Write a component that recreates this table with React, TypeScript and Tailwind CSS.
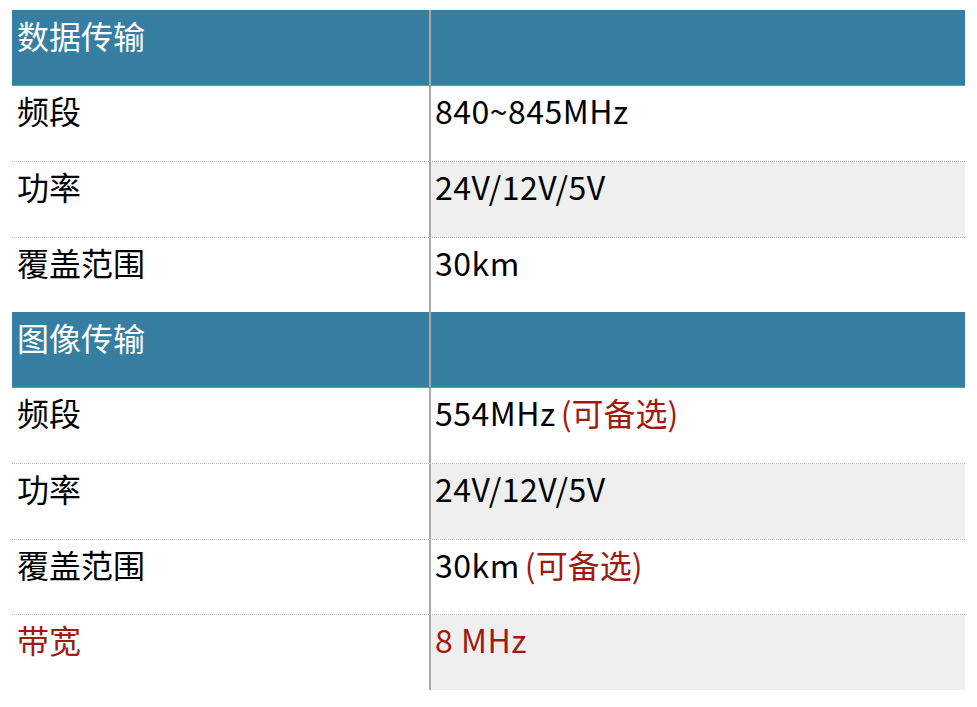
type Row = {
  label: string;
  value: string;
  note?: string;
  red?: boolean;
  shaded?: boolean;
  dotted?: boolean;
};

type Section = { title: string; rows: Row[] };

const sections: Section[] = [
  {
    title: "数据传输",
    rows: [
      { label: "频段", value: "840~845MHz" },
      { label: "功率", value: "24V/12V/5V", shaded: true, dotted: true },
      { label: "覆盖范围", value: "30km", dotted: true },
    ],
  },
  {
    title: "图像传输",
    rows: [
      { label: "频段", value: "554MHz", note: "(可备选)" },
      { label: "功率", value: "24V/12V/5V", shaded: true, dotted: true },
      { label: "覆盖范围", value: "30km", note: "(可备选)", dotted: true },
      { label: "带宽", value: "8 MHz", red: true, shaded: true, dotted: true },
    ],
  },
];

const font = "font-['Noto_Sans_CJK_SC','Noto_Sans',sans-serif]";

export default function App() {
  return (
    <main className={`w-[977px] h-[707px] bg-white pt-[10px] pl-[12px] ${font}`}>
      <div className="w-[953px]">
        {sections.map((s) => (
          <div key={s.title}>
            <div className="grid grid-cols-[417px_1fr] h-[75.5px] bg-[#367ea2] border-b border-[#8c8c8c]">
              <div className="pl-[5px] pt-[5px] text-[32px] leading-[40px] text-white">{s.title}</div>
              <div className="border-l-2 border-[#a9a9a9]" />
            </div>
            {s.rows.map((r, i) => (
              <div
                key={i}
                className={`grid grid-cols-[417px_1fr] h-[75.5px] ${
                  r.dotted ? "border-t border-dotted border-[#b5b5b5]" : ""
                }`}
              >
                <div
                  className={`pl-[5px] pt-[4px] text-[32px] leading-[40px] ${
                    r.red ? "text-[#a11a12]" : "text-black"
                  }`}
                >
                  {r.label}
                </div>
                <div
                  className={`border-l-2 border-[#a9a9a9] pl-[4px] pt-[4px] text-[32px] leading-[40px] ${
                    r.shaded ? "bg-[#efefef]" : "bg-white"
                  } ${r.red ? "text-[#a11a12]" : "text-black"}`}
                >
                  <span className="tracking-[0.5px]">{r.value}</span>
                  {r.note && <span className="ml-[5px] text-[#a11a12]">{r.note}</span>}
                </div>
              </div>
            ))}
          </div>
        ))}
      </div>
    </main>
  );
}
